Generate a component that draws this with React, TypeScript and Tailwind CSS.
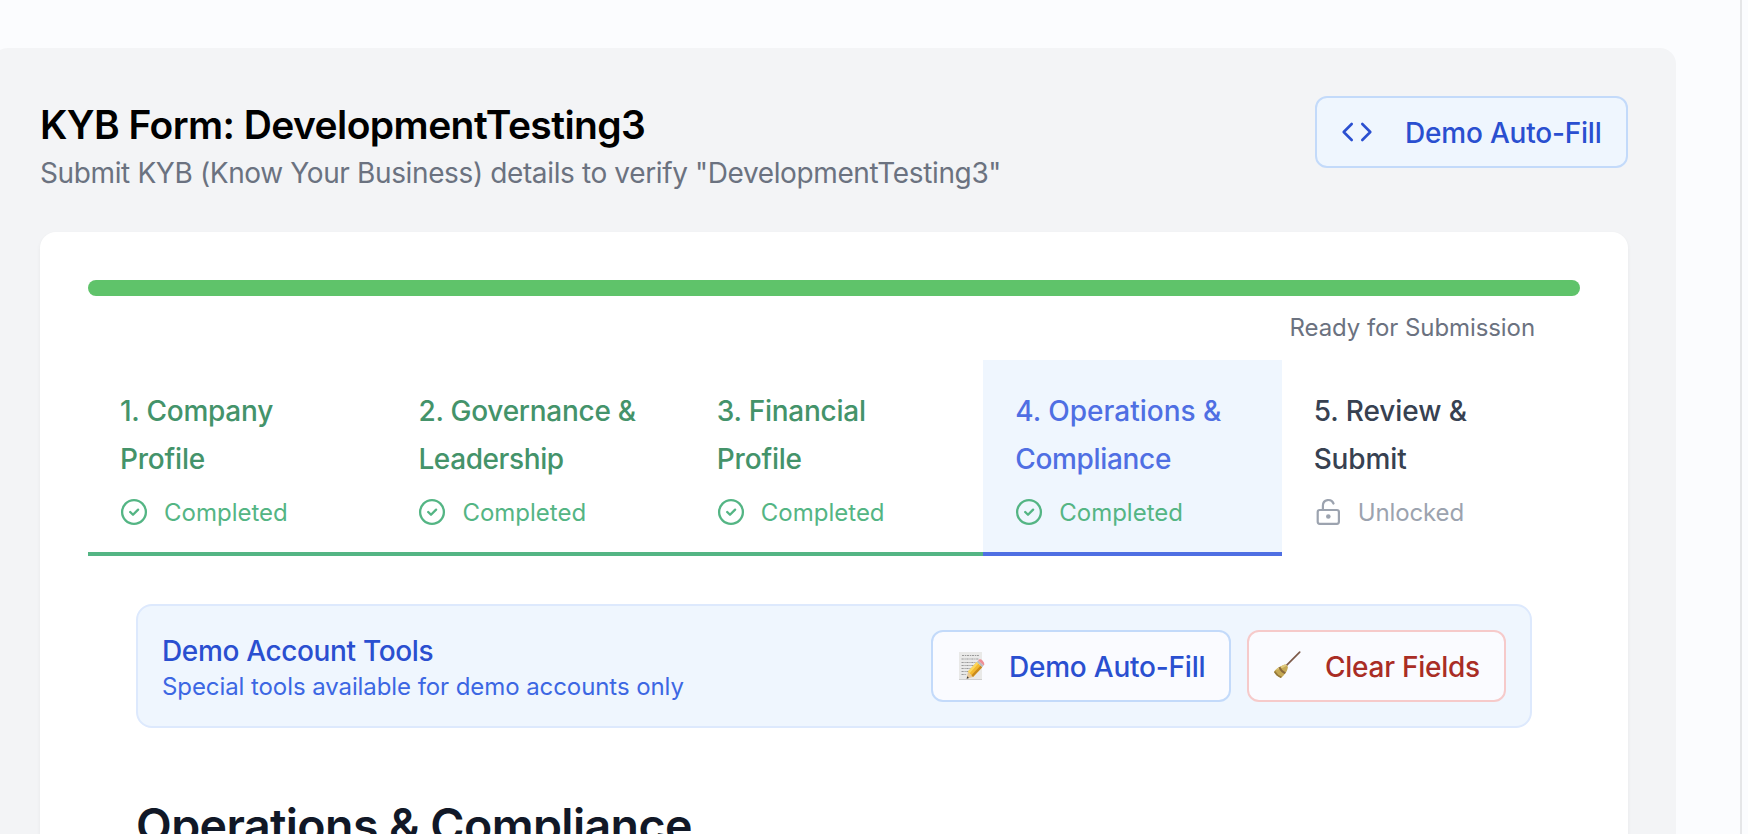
import type { ReactNode } from 'react';

function CodeIcon() {
  return (
    <svg className="h-8 w-8 shrink-0" viewBox="0 0 32 32" fill="none" stroke="currentColor" strokeWidth="2.6" strokeLinecap="round" strokeLinejoin="round">
      <path d="M10.700 8 2.700 16l8 8M21.300 8l8 8-8 8" />
    </svg>
  );
}

function CheckCircleIcon() {
  return (
    <svg className="h-7 w-7 shrink-0" viewBox="0 0 28 28" fill="none" stroke="currentColor" strokeWidth="2.3" strokeLinecap="round" strokeLinejoin="round">
      <circle cx="14" cy="14" r="11.9" />
      <path d="m10.2 14 2.8 2.8 5.1-5.2" />
    </svg>
  );
}

function UnlockIcon() {
  return (
    <svg className="h-7 w-7 shrink-0" viewBox="0 0 28 28" fill="none" stroke="currentColor" strokeWidth="2.2" strokeLinecap="round" strokeLinejoin="round">
      <rect x="3.7" y="12" width="21.2" height="13.8" rx="2" />
      <path d="M8.9 12V7.5a5.5 5.5 0 0 1 10.6-2" />
      <circle cx="14.3" cy="18.5" r="2.3" fill="currentColor" stroke="none" />
    </svg>
  );
}

function MemoIcon() {
  return (
    <svg className="h-8 w-8 shrink-0" viewBox="0 0 32 32">
      <rect x="2" y="2" width="23" height="28" fill="#e9e9e8" />
      <rect x="2" y="29" width="23" height="1" fill="#cfcfcf" />
      <g stroke="#9a9a9a" strokeWidth="1" strokeDasharray="2.2 0.8 1.2 0.7">
        <path d="M5 5.500h17M4.500 9h17M4.500 12.500h15M4.500 15.500h12M4.500 18.500h9M4.500 21.500h7M4.500 24.500h5" />
      </g>
      <g transform="translate(0 1)">
        <path d="M9.600 27.800 11 20.600 16 25.900Z" fill="#e8c898" />
        <path d="M9.600 27.800 10.300 25.200 12 26.900Z" fill="#3b3b3b" />
        <path d="M11 20.600 19.900 10.900 25.200 16.200 16 25.900Z" fill="#f4b92e" />
        <path d="M11 20.600 19.900 10.900 21.500 12.500 12.600 22.300Z" fill="#fbd75c" />
        <path d="M14.500 24.300 23.600 14.600 25.200 16.200 16 25.900Z" fill="#c98a1d" />
        <path d="m19.900 10.900 1.400-1.500 5.300 5.200-1.400 1.600Z" fill="#b9bcc0" />
        <path d="m21.300 9.400.7-.8q1.600-1 3.500.8 1.900 1.900 1.900 4.200l-.8 1Z" fill="#ee8f96" />
      </g>
    </svg>
  );
}

function BroomIcon() {
  return (
    <svg className="h-8 w-8 shrink-0" viewBox="0 0 32 32">
      <g transform="translate(0 .6)">
        <path d="M26.700 1.600 12.500 15.800" stroke="#7d5a4a" strokeWidth="1.700" strokeLinecap="round" />
        <path d="M10.500 14.300q2-1 3.600.6 1.500 1.600.4 3.400-1 4.300-6.700 9.100Q3 25.500 1 21.500q1.300-3.800 9.500-7.200Z" fill="#c6a955" />
        <path d="M10.500 14.300q2-1 3.600.6-5 3.500-11.500 4.700 2.400-2.800 7.900-5.300Z" fill="#e0ca7e" />
        <path d="M5.600 17q2 5 6.200 6.500l1-1.600q-3.900-1.700-5.500-5.800Z" fill="#8a6a3c" />
        <path d="M1 21.500q2 4 6.800 5.900l1.200-1.200q-4.400-1.700-6.800-5.900Z" fill="#94783a" />
      </g>
    </svg>
  );
}

type TabState = 'done' | 'active' | 'open';

const tabs: { lines: { text: string; tracking: string }[]; state: TabState }[] = [
  { lines: [{ text: '1. Company', tracking: 'tracking-[-0.26px]' }, { text: 'Profile', tracking: 'tracking-[-0.2px]' }], state: 'done' },
  { lines: [{ text: '2. Governance &', tracking: 'tracking-[-0.26px]' }, { text: 'Leadership', tracking: 'tracking-[-0.4px]' }], state: 'done' },
  { lines: [{ text: '3. Financial', tracking: 'tracking-[-0.25px]' }, { text: 'Profile', tracking: 'tracking-[-0.2px]' }], state: 'done' },
  { lines: [{ text: '4. Operations &', tracking: 'tracking-normal' }, { text: 'Compliance', tracking: 'tracking-[-0.33px]' }], state: 'active' },
  { lines: [{ text: '5. Review &', tracking: 'tracking-[-0.05px]' }, { text: 'Submit', tracking: 'tracking-[-0.1px]' }], state: 'open' },
];

const tabStyles: Record<TabState, string> = {
  done: 'border-[#54b584] text-[#44936a]',
  active: 'border-[#4f6fe3] bg-[#eff6fe] text-[#4f6fe3]',
  open: 'border-transparent text-[#374151]',
};

function StepTab({ lines, state }: { lines: { text: string; tracking: string }[]; state: TabState }) {
  const open = state === 'open';
  return (
    <div className={`flex h-[196px] flex-1 flex-col border-b-4 px-8 pt-[27px] ${tabStyles[state]}`}>
      {lines.map((l) => (
        <div key={l.text} className={`text-[28px] leading-[48px] font-medium whitespace-nowrap ${l.tracking}`}>{l.text}</div>
      ))}
      <div className={`mt-2 flex items-center gap-4 text-2xl leading-10 ${open ? 'tracking-[-0.1px] text-[#9ca3af]' : 'text-[#54b584]'}`}>
        {open ? <UnlockIcon /> : <CheckCircleIcon />}
        <span className="pt-0.5">{open ? 'Unlocked' : 'Completed'}</span>
      </div>
    </div>
  );
}

function ActionButton({ className, children }: { className: string; children: ReactNode }) {
  return (
    <button className={`flex h-[72px] shrink-0 items-center rounded-xl border-2 pl-6 text-[28px] font-medium whitespace-nowrap ${className}`}>
      {children}
    </button>
  );
}

export default function App() {
  return (
    <div className="flex h-[834px] w-full overflow-hidden bg-[#fbfcfe] font-['Inter',sans-serif]">
      <div className="w-[1740px] shrink-0 pt-12">
        <div className="-ml-2 h-[850px] w-[1684px] rounded-2xl bg-[#f3f4f6] px-12 pt-12">
          <header className="flex h-[136px] items-start justify-between">
            <div className="pt-[9px]">
              <h1 className="text-[39px] leading-10 font-semibold tracking-[-0.58px] text-black">KYB Form: DevelopmentTesting3</h1>
              <p className="mt-2 text-[28px] leading-10 tracking-[-0.375px] text-[#6b7280]">
                Submit KYB (Know Your Business) details to verify "DevelopmentTesting3"
              </p>
            </div>
            <ActionButton className="w-[313px] gap-8 border-[#c3dafa] bg-[#eff6fe] tracking-[-0.2px] text-[#2a4fd0]">
              <CodeIcon />
              <span className="pt-0.5">Demo Auto-Fill</span>
            </ActionButton>
          </header>

          <main className="h-[700px] rounded-2xl bg-white px-12 pt-12 shadow-[0_2px_4px_rgba(0,0,0,0.05)]">
            <div className="h-4 rounded-full bg-[#5fc36a]" />
            <div className="mt-4 pr-[45px] text-right text-2xl leading-8 tracking-[-0.08px] text-[#6b7280]">Ready for Submission</div>

            <nav className="mt-4 flex">
              {tabs.map((t) => (
                <StepTab key={t.lines[0].text} lines={t.lines} state={t.state} />
              ))}
            </nav>

            <section className="px-12 pt-12">
              <div className="flex h-[124px] items-center justify-between rounded-2xl border-2 border-[#dde9fd] bg-[#eff6fe] px-6">
                <div className="pt-0.5">
                  <div className="text-[28px] leading-10 font-medium tracking-[-0.35px] text-[#2a4fd0]">Demo Account Tools</div>
                  <div className="text-2xl leading-8 tracking-[-0.08px] text-[#3c67e3]">Special tools available for demo accounts only</div>
                </div>
                <div className="flex gap-4">
                  <ActionButton className="w-[300px] gap-5 border-[#c3dafa] bg-[#fafbff] tracking-[-0.22px] text-[#2a4fd0]">
                    <MemoIcon />
                    <span className="pt-0.5">Demo Auto-Fill</span>
                  </ActionButton>
                  <ActionButton className="w-[259px] gap-5 border-[#f6caca] bg-[#fafbff] tracking-[-0.25px] text-[#a92d25]">
                    <BroomIcon />
                    <span className="pt-0.5">Clear Fields</span>
                  </ActionButton>
                </div>
              </div>
              <h2 className="mt-[65px] text-[46.5px] leading-[65px] font-semibold tracking-[-0.6px] text-[#111827]">Operations &amp; Compliance</h2>
            </section>
          </main>
        </div>
      </div>
      <div className="w-0.5 shrink-0 bg-[#e5e6e8]" />
    </div>
  );
}
